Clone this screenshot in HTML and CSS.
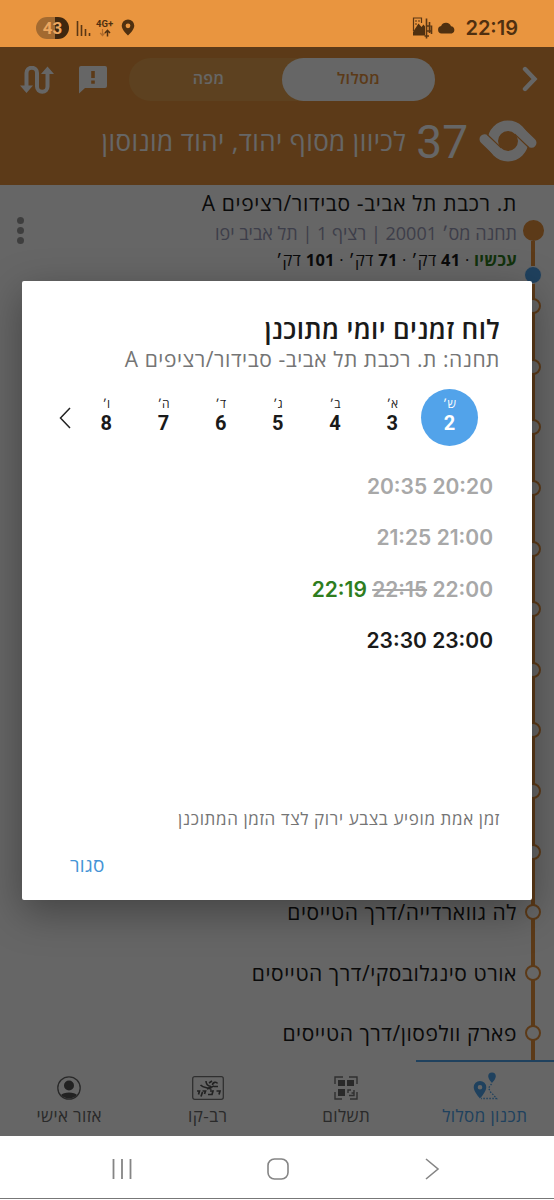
FILE: index.html
```html
<!DOCTYPE html>
<html lang="he" dir="rtl">
<head>
    <meta charset="UTF-8">
    <meta name="viewport" content="width=device-width, initial-scale=1.0">
    <title>לוח זמנים יומי</title>
    <link rel="stylesheet" href="styles.css">
</head>
<body>
<div class="phone">
    <div class="status-bar">
        <div class="status-left">
            <span class="battery">43</span>
            <svg class="signal" width="16" height="18" viewBox="0 0 16 18"><path d="M1.5 2v15M5.5 6v11M9.5 10v7M13.5 14v3" stroke="#5a3714" stroke-width="1.6" fill="none"/></svg>
            <span class="network">
                <b>4G+</b>
                <svg width="12" height="8" viewBox="0 0 12 8"><path d="M3.5 0v6M1.2 4l2.3 2.5L5.8 4" stroke="#b06c2c" stroke-width="1.2" fill="none"/><path d="M8.5 7.5v-6M6 4l2.5-2.7L11 4" stroke="#4f3010" stroke-width="1.5" fill="none"/></svg>
            </span>
            <svg class="pin" width="14" height="17" viewBox="0 0 14 17"><path fill-rule="evenodd" d="M7 .5A6.3 6.3 0 0 0 .7 6.8C.7 11 7 16.5 7 16.5s6.3-5.5 6.3-9.7A6.3 6.3 0 0 0 7 .5zm0 3.9a2.4 2.4 0 1 1 0 4.8 2.4 2.4 0 0 1 0-4.800z" fill="#4f3010"/></svg>
        </div>
        <div class="status-right">
            <svg width="21" height="22" viewBox="0 0 21 22"><path d="M1.500 14V1h8v5M3 4h2M6 4h2M3 7h2" stroke="#5a3714" stroke-width="1.200" fill="none"/><path d="M1 18.500V15l5.500-8.500 3 3.500 2-2.500 1.500 2v9z" fill="#4f3010"/><path d="M14.500 1.500v20M17.500 5v11M12.500 19h4.500M14.500 9h4M14.500 14h5M19.500 8.500V17" stroke="#5a3714" stroke-width="1.600" fill="none"/></svg>
            <svg width="19" height="12" viewBox="0 0 19 12"><path d="M4.500 11.500a3.800 3.800 0 0 1-.4-7.500A5.300 5.300 0 0 1 14 4.300a3.700 3.700 0 0 1 .8 7.200z" fill="#4f3010"/></svg>
            <span class="clock">22:19</span>
        </div>
    </div>

    <div class="app">
        <div class="header">
            <div class="toolbar">
                <svg class="back" width="16" height="26" viewBox="0 0 16 26"><path d="M3 3l9.500 10L3 23" stroke="#fff" stroke-width="4.400" stroke-linecap="round" fill="none"/></svg>
                <div class="switch">
                    <span class="switch-item active">מסלול</span>
                    <span class="switch-item">מפה</span>
                </div>
                <svg class="feedback" width="28" height="28" viewBox="0 0 28 28"><path fill-rule="evenodd" d="M2 0h24a2 2 0 0 1 2 2v18a2 2 0 0 1-2 2H6l-6 5.500V2a2 2 0 0 1 2-2zm10.200 5v7h3.600V5zm0 9.500v3.200h3.600v-3.200z" fill="#fff"/></svg>
                <svg class="route" width="34" height="28" viewBox="0 0 34 28"><path d="M6.500 21V7a5 5 0 0 1 10.500 0v13.500a5.200 5.200 0 0 0 10.500 0V7" stroke="#fff" stroke-width="4" fill="none"/><path d="M0 19.500h13L6.500 27zM21 8h13L27.500.5z" fill="#fff"/></svg>
            </div>
            <div class="line-title">
                <svg width="60" height="42" viewBox="0 0 60 42"><circle cx="30" cy="21" r="15.200" stroke="#fff" stroke-width="10.400" fill="none"/><path d="M40.600 10.400L53.500 22.800M19.400 31.600L6.500 19.200" stroke="#fff" stroke-width="10" stroke-linecap="round" fill="none"/><path d="M36.800 14.100L51 27.800M23.200 27.900L9 14.200" stroke="#e6913c" stroke-width="1.200" fill="none"/></svg>
                <span class="line-number">37</span>
                <span class="line-name">לכיוון מסוף יהוד, יהוד מונוסון</span>
            </div>
        </div>

        <div class="stops">
            <div class="stop-current">
                <div class="rail">
                    <i class="dot-big"></i>
                    <i class="rail-line"></i>
                    <i class="dot-bus"></i>
                </div>
                <div class="stop-info">
                    <div class="stop-name">ת. רכבת תל אביב- סבידור/רציפים A</div>
                    <div class="stop-meta">תחנה מס׳ 20001 | רציף 1 | תל אביב יפו</div>
                    <div class="stop-times"><b class="now">עכשיו</b> · <b>41</b> דק׳ · <b>71</b> דק׳ · <b>101</b> דק׳</div>
                </div>
                <div class="more"><i></i><i></i><i></i></div>
            </div>
            <div class="stop"><i class="dot"></i></div>
            <div class="stop"><i class="dot"></i></div>
            <div class="stop"><i class="dot"></i></div>
            <div class="stop"><i class="dot"></i></div>
            <div class="stop"><i class="dot"></i></div>
            <div class="stop"><i class="dot"></i></div>
            <div class="stop"><i class="dot"></i></div>
            <div class="stop"><i class="dot"></i></div>
            <div class="stop"><i class="dot"></i></div>
            <div class="stop"><i class="dot"></i></div>
            <div class="stop"><i class="dot"></i><span>לה גווארדייה/דרך הטייסים</span></div>
            <div class="stop"><i class="dot"></i><span>אורט סינגלובסקי/דרך הטייסים</span></div>
            <div class="stop"><i class="dot"></i><span>פארק וולפסון/דרך הטייסים</span></div>
        </div>

        <div class="tabs">
            <div class="tab active">
                <svg width="26" height="28" viewBox="0 0 26 28"><path fill-rule="evenodd" d="M8 9a6.300 6.300 0 0 0-6.300 6.300C1.700 20 8 26.500 8 26.500s6.300-6.500 6.300-11.200A6.300 6.300 0 0 0 8 9zm0 3.900a2.300 2.300 0 1 1 0 4.600 2.300 2.300 0 0 1 0-4.600zM20 .5a3.800 3.800 0 0 0-3.800 3.800c0 2.900 3.800 6.700 3.800 6.700s3.800-3.800 3.800-6.700A3.800 3.800 0 0 0 20 .5z" fill="#4fa3ea"/><path d="M19.500 12l-3 4 2 4 3 3 3 3.500H9" stroke="#4fa3ea" stroke-width="1.300" stroke-dasharray="1.500 1.500" fill="none"/></svg>
                <span>תכנון מסלול</span>
            </div>
            <div class="tab">
                <svg width="24" height="24" viewBox="0 0 24 24"><path d="M1 8V1h8M15 1h8v7M23 16v7h-7M8 23H1v-7" stroke="#777" stroke-width="1.400" fill="none"/><path d="M4 4h7v6H4zM13 4h7v6h-7zM4 13h7v7H4z" fill="#666"/><path d="M14 17v-3h3M20 14v5.500h-5M17.500 17h2" stroke="#777" stroke-width="1.400" fill="none"/></svg>
                <span>תשלום</span>
            </div>
            <div class="tab">
                <svg width="32" height="24" viewBox="0 0 32 24"><rect x=".7" y=".7" width="30.600" height="22.600" rx="2" stroke="#777" stroke-width="1.300" fill="none"/><path d="M5 15h2.500l-1 3.500M10.500 15h3l-1 3M10.500 16l-1.500 4.500M18 15h3l-1 3.500h-4M24.500 15h3.500l-1 3.500" stroke="#555" stroke-width="1.700" fill="none"/><path d="M8.500 9c3 3.500 8 2 11 4.500M14 5c0 3 2 5 5 5.500M17 7l3-2M20.500 9c0-3 4-3.500 5-1.500M22 10.500h4M15 13l7-3" stroke="#555" stroke-width="1.600" fill="none"/></svg>
                <span>רב-קו</span>
            </div>
            <div class="tab">
                <svg width="24" height="24" viewBox="0 0 24 24"><circle cx="12" cy="12" r="11.200" stroke="#666" stroke-width="1.300" fill="none"/><circle cx="12" cy="9.500" r="5" fill="#555"/><path d="M4 19c2-3.500 14-3.500 16 0a11 11 0 0 1-16 0z" fill="#555"/></svg>
                <span>אזור אישי</span>
            </div>
        </div>

        <div class="overlay">
            <div class="dialog">
                <div class="dialog-title">לוח זמנים יומי מתוכנן</div>
                <div class="dialog-sub">תחנה: ת. רכבת תל אביב- סבידור/רציפים A</div>
                <div class="days">
                    <div class="day selected"><span>ש׳</span><b>2</b></div>
                    <div class="day"><span>א׳</span><b>3</b></div>
                    <div class="day"><span>ב׳</span><b>4</b></div>
                    <div class="day"><span>ג׳</span><b>5</b></div>
                    <div class="day"><span>ד׳</span><b>6</b></div>
                    <div class="day"><span>ה׳</span><b>7</b></div>
                    <div class="day"><span>ו׳</span><b>8</b></div>
                    <svg width="12" height="22" viewBox="0 0 12 22"><path d="M11 1L1.500 11 11 21" stroke="#222" stroke-width="1.500" fill="none"/></svg>
                </div>
                <div class="times">
                    <div class="past">20:20 20:35</div>
                    <div class="past">21:00 21:25</div>
                    <div class="past">22:00 <s>22:15</s> <span class="real">22:19</span></div>
                    <div>23:00 23:30</div>
                </div>
                <div class="note">זמן אמת מופיע בצבע ירוק לצד הזמן המתוכנן</div>
                <div class="close">סגור</div>
            </div>
        </div>
    </div>

    <div class="nav-bar">
        <svg width="16" height="24" viewBox="0 0 16 24"><path d="M2 2l12 10L2 22" stroke="#858585" stroke-width="1.600" fill="none"/></svg>
        <svg width="22" height="22" viewBox="0 0 22 22"><rect x="1" y="1" width="20" height="20" rx="6.500" stroke="#858585" stroke-width="1.600" fill="none"/></svg>
        <svg width="20" height="22" viewBox="0 0 20 22"><path d="M1.500 1v20M10 1v20M18.500 1v20" stroke="#858585" stroke-width="1.800" fill="none"/></svg>
    </div>
</div>
</body>
</html>
```
FILE: styles.css
```css
* {
    box-sizing: border-box;
}
body {
    margin: 0;
    font-family: "Open Sans", "Liberation Sans", sans-serif;
    color: #1a1a1a;
}
svg {
    display: block;
    flex: none;
}
.phone {
    width: 554px;
    height: 1200px;
    display: flex;
    flex-direction: column;
    overflow: hidden;
    background: #fff;
}

/* status bar */
.status-bar {
    direction: ltr;
    height: 47px;
    flex: none;
    padding: 8px 36px 0;
    display: flex;
    justify-content: space-between;
    align-items: center;
    background: #e9953f;
    color: #4f3010;
}
.status-left, .status-right {
    display: flex;
    align-items: center;
}
.battery {
    width: 33px;
    height: 22px;
    border-radius: 11px;
    background: linear-gradient(90deg, #a36a30 58%, #3f270f 58%);
    color: #eda75f;
    font: bold 17px/22px Roboto, sans-serif;
    text-align: center;
    margin-right: 7px;
}
.network {
    display: flex;
    flex-direction: column;
    align-items: center;
    margin: 0 8px 0 4px;
    font: 9.5px/10px Roboto, sans-serif;
}
.clock {
    font: 600 20px/24px Inter, sans-serif;
    margin-left: 9px;
}
.status-right svg + svg {
    margin-left: 4px;
}

.app {
    position: relative;
    height: 1089px;
    flex: none;
    display: flex;
    flex-direction: column;
}

/* header */
.header {
    height: 138px;
    flex: none;
    background: #e6913c;
    color: #fff;
}
.toolbar {
    height: 64px;
    padding: 11px 16px 0 20px;
    display: flex;
    align-items: flex-start;
}
.back {
    margin-top: 8px;
}
.switch {
    width: 306px;
    height: 43px;
    margin: 0 87px 0 22px;
    border-radius: 22px;
    display: flex;
    flex: none;
    background: #e8a450;
}
.switch-item {
    flex: 0 0 50%;
    border-radius: 22px;
    font-size: 16px;
    font-weight: 600;
    letter-spacing: 0.4px;
    line-height: 40px;
    text-align: center;
}
.switch-item.active {
    padding-left: 0;
    background: #fff;
    color: #e6913c;
}
.switch-item:last-child {
    padding-left: 6px;
}
.feedback {
    margin-top: 8px;
}
.route {
    margin: 8px 25px 0 0;
}
.line-title {
    height: 60px;
    padding-right: 16px;
    display: flex;
    align-items: center;
}
.line-number {
    font: 400 46px/60px Roboto, sans-serif;
    margin: 2px 10px 0;
}
.line-name {
    font-size: 26px;
    letter-spacing: 0.4px;
    line-height: 60px;
    white-space: nowrap;
}

/* stops */
.stops {
    height: 875px;
    flex: none;
    overflow: hidden;
    isolation: isolate;
    background: #fff;
}
.stop-current {
    height: 91px;
    display: flex;
}
.rail {
    width: 42px;
    height: 99px;
    padding-top: 35px;
    display: flex;
    flex-direction: column;
    align-items: center;
    flex: none;
    z-index: 1;
}
.dot-big {
    width: 21px;
    height: 21px;
    border-radius: 50%;
    background: #e6913c;
}
.rail-line {
    width: 4px;
    height: 26px;
    background: #e6913c;
}
.dot-bus {
    width: 18px;
    height: 18px;
    flex: none;
    border: 1px solid #fff;
    border-radius: 50%;
    background: #4fa3ea;
}
.stop-info {
    flex: 1;
    padding: 3px 0 0;
    margin-right: -5px;
    white-space: nowrap;
}
.stop-name {
    font-size: 21px;
    letter-spacing: 0.65px;
    line-height: 30px;
}
.stop-meta {
    font-size: 18px;
    line-height: 31px;
    color: #9a9bb8;
}
.stop-times {
    font-size: 16.5px;
    letter-spacing: 0.25px;
    line-height: 22px;
}
.now {
    color: #2f7d1e;
}
.more {
    display: flex;
    flex-direction: column;
    gap: 3px;
    padding: 32px 0 0 17px;
}
.more i {
    width: 7px;
    height: 7px;
    border-radius: 50%;
    background: #9c9c9c;
}
.stop {
    height: 60.6px;
    padding-right: 13px;
    display: flex;
    align-items: center;
    gap: 8px;
    font-size: 21px;
    letter-spacing: 0.55px;
    white-space: nowrap;
    background: linear-gradient(#e6913c, #e6913c) right 19px top / 4px 100% no-repeat;
}
.dot {
    width: 16px;
    height: 16px;
    flex: none;
    border: 2.5px solid #e6913c;
    border-radius: 50%;
    background: #fff;
}

/* bottom tabs */
.tabs {
    height: 76px;
    flex: none;
    display: flex;
    background: #fff;
}
.tab {
    flex: 1;
    display: flex;
    flex-direction: column;
    align-items: center;
    justify-content: flex-end;
    gap: 3px;
    padding-bottom: 8px;
    border-top: 2px solid transparent;
    font-size: 17px;
    letter-spacing: 0.4px;
    line-height: 25px;
    color: #6a6a6a;
}
.tab.active {
    border-top-color: #4fa3ea;
    color: #4fa3ea;
}

/* dialog */
.overlay {
    position: absolute;
    inset: 0;
    display: flex;
    align-items: center;
    justify-content: center;
    background: rgba(0, 0, 0, 0.6);
}
.dialog {
    width: 510px;
    height: 619px;
    margin-bottom: 2px;
    padding: 32px 32px 0 0;
    display: flex;
    flex-direction: column;
    border-radius: 2px;
    background: #fff;
    box-shadow: 0 12px 40px rgba(0, 0, 0, 0.35);
    white-space: nowrap;
}
.dialog-title {
    font-size: 26px;
    font-weight: 600;
    letter-spacing: 0.35px;
    line-height: 32px;
}
.dialog-sub {
    font-size: 21px;
    letter-spacing: 0.55px;
    line-height: 28px;
    color: #757575;
}
.days {
    display: flex;
    align-items: center;
    margin: 16px 22px 0 0;
}
.day {
    width: 57.2px;
    height: 57px;
    padding-top: 5px;
    border-radius: 50%;
    display: flex;
    flex-direction: column;
    align-items: center;
    font-size: 12px;
    line-height: 19px;
}
.day b {
    font: bold 20px/20px Roboto, sans-serif;
}
.day.selected {
    background: #52a3ea;
    color: #fff;
}
.days svg {
    margin-right: 7px;
}
.times {
    margin: 15px 7px 0 0;
    font: 600 21px/51.3px Inter, sans-serif;
}
.past {
    color: #a8a8a8;
}
.real {
    color: #2f7d1e;
}
.note {
    margin-top: 140px;
    font-size: 17px;
    letter-spacing: 0.62px;
    line-height: 26px;
    color: #757575;
}
.close {
    align-self: flex-end;
    margin: 19px 0 0 48px;
    font-size: 19px;
    letter-spacing: 0.3px;
    line-height: 28px;
    color: #4494d6;
}

.nav-bar {
    direction: ltr;
    height: 63px;
    flex: none;
    padding: 4px 114px 0 112px;
    display: flex;
    flex-direction: row-reverse;
    justify-content: space-between;
    align-items: center;
    border-bottom: 1px solid #777;
    background: #fff;
}
```
